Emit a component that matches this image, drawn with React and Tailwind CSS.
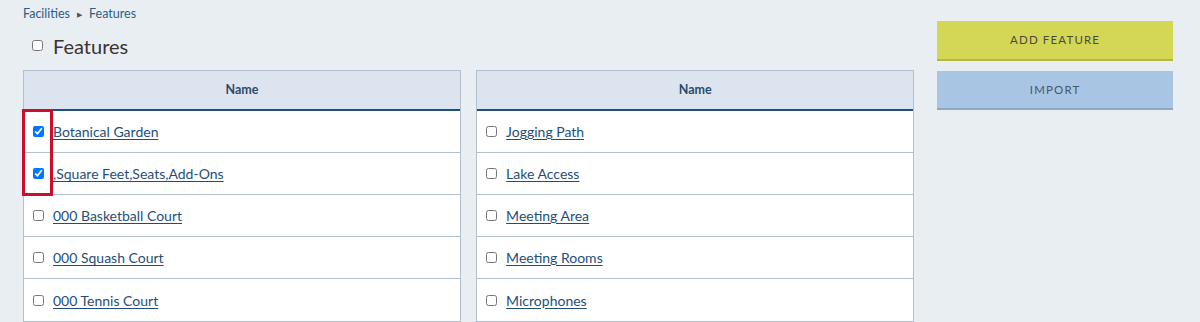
import { useState } from "react";

const LEFT = [
  { name: "Botanical Garden", checked: true },
  { name: ",Square Feet,Seats,Add-Ons", checked: true },
  { name: "000 Basketball Court" },
  { name: "000 Squash Court" },
  { name: "000 Tennis Court" },
];

const RIGHT = [
  { name: "Jogging Path" },
  { name: "Lake Access" },
  { name: "Meeting Area" },
  { name: "Meeting Rooms" },
  { name: "Microphones" },
];

function FeatureTable({ rows, highlight }) {
  return (
    <div className="flex-1 border border-[#b3bfcd] bg-white relative">
      <div className="h-[40px] bg-[#dbe4ef] border-b-2 border-[#1f4e79] flex items-center justify-center text-[12.5px] font-bold text-[#2b4a6b]">
        Name
      </div>
      {rows.map((r, i) => (
        <div
          key={r.name}
          className={`h-[42px] flex items-center pl-[9px] gap-[9px] ${i < rows.length - 1 ? "border-b border-[#b3bfcd]" : ""}`}
        >
          <input type="checkbox" defaultChecked={r.checked} className="w-[11px] h-[11px] m-0" />
          <a href="#" className="text-[14px] text-[#1f4e79] underline underline-offset-2">
            {r.name}
          </a>
        </div>
      ))}
      {highlight && (
        <div className="absolute left-[-2px] top-[38px] w-[31px] h-[87px] border-[3px] border-[#c8102e] pointer-events-none" />
      )}
    </div>
  );
}

export default function App() {
  const [all, setAll] = useState(false);
  return (
    <div className="w-[1200px] h-[322px] overflow-hidden bg-[#e9eef3] flex pl-[23px] pr-[27px]" style={{ fontFamily: "Lato, 'Noto Sans', sans-serif" }}>
      <div className="w-[892px] flex flex-col">
        <div className="pt-[6px] h-[22px] text-[12.5px] text-[#2e5d87] flex items-center gap-[7px]">
          <span>Facilities</span>
          <span className="text-[7px] text-[#555]">▶</span>
          <span>Features</span>
        </div>
        <div className="h-[50px] flex items-center gap-[10px] pl-[9px] pb-[1px]">
          <input type="checkbox" checked={all} onChange={() => setAll(!all)} className="w-[11px] h-[11px] m-0" />
          <h1 className="text-[20px] text-[#3a3333] leading-none">Features</h1>
        </div>
        <div className="flex gap-[15px]">
          <FeatureTable rows={LEFT} highlight />
          <FeatureTable rows={RIGHT} />
        </div>
      </div>
      <div className="ml-[23px] w-[236px] pt-[21px] flex flex-col gap-[10px]">
        <button type="button" className="h-[40px] bg-[#d4d656] border-b-2 border-[#b5b741] text-[11.5px] tracking-[0.1em] text-[#4a4a3a]">
          ADD FEATURE
        </button>
        <button type="button" className="h-[39px] bg-[#a8c6e4] border-b-2 border-[#8fa9c4] text-[11.5px] tracking-[0.1em] text-[#4a5568]">
          IMPORT
        </button>
      </div>
    </div>
  );
}
